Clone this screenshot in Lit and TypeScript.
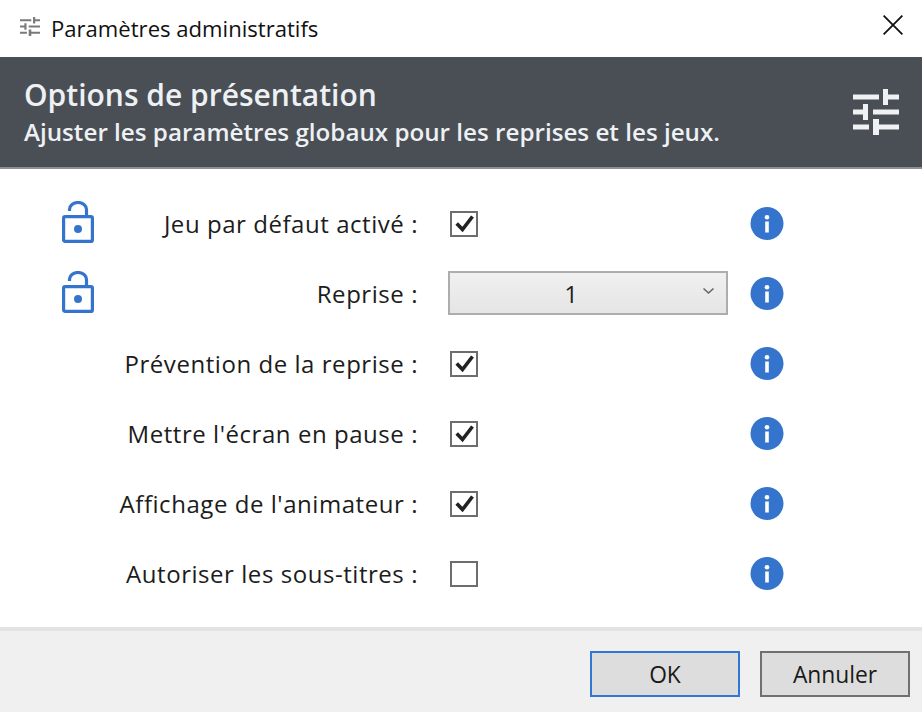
import { LitElement, html, css, svg } from "lit";
import { customElement } from "lit/decorators.js";

const sliders = svg`<path d="M0 5.5h26v5H0zM30 0h5v16h-5zM35 5.5h11v5H35zM0 20.5h10v5H0zM10 15h5v16h-5zM20 20.5h26v5H20zM0 35.5h16v5H0zM20 30h6v16h-6zM26 35.5h20v5H26z"/>`;

interface Row {
  label: string;
  kind: "check" | "empty" | "select";
  lock?: boolean;
}

const ROWS: Row[] = [
  { label: "Jeu par défaut activé :", kind: "check", lock: true },
  { label: "Reprise :", kind: "select", lock: true },
  { label: "Prévention de la reprise :", kind: "check" },
  { label: "Mettre l'écran en pause :", kind: "check" },
  { label: "Affichage de l'animateur :", kind: "check" },
  { label: "Autoriser les sous-titres :", kind: "empty" },
];

@customElement("app-root")
export class AppRoot extends LitElement {
  static styles = css`
    :host {
      display: flex;
      flex-direction: column;
      width: 922px;
      height: 712px;
      background: #fff;
      font-family: "Open Sans", "Noto Sans", sans-serif;
      color: #1a1a1a;
      overflow: hidden;
    }
    .titlebar {
      height: 57px;
      flex: none;
      display: flex;
      align-items: center;
      box-sizing: border-box;
      padding: 0 19px 0 20px;
    }
    .title-icon {
      width: 20px;
      height: 19px;
      fill: #7a7a7a;
      margin: 0 11px 4px 0;
    }
    .title {
      flex: 1;
      font-size: 22.1px;
      color: #111;
      white-space: nowrap;
      margin-bottom: 2px;
    }
    .close {
      width: 20px;
      height: 20px;
      stroke: #111;
      stroke-width: 1.8;
      fill: none;
      margin-bottom: 7px;
    }
    .header {
      height: 112px;
      flex: none;
      box-sizing: border-box;
      background: #4a4e55;
      border-bottom: 2px solid #8e9193;
      display: flex;
      align-items: center;
      justify-content: space-between;
      padding: 0 23px 0 24px;
      color: #eef1f4;
    }
    .h1 {
      font-size: 30px;
      font-weight: 600;
      line-height: 38px;
      white-space: nowrap;
      margin-bottom: 2px;
    }
    .h2 {
      font-size: 24.2px;
      font-weight: 600;
      line-height: 32px;
      white-space: nowrap;
    }
    .header-icon {
      width: 46px;
      height: 46px;
      fill: #f0f1f2;
    }
    .body {
      flex: 1;
      box-sizing: border-box;
      padding: 20px 0 0 62px;
      display: grid;
      grid-template-columns: 32px 323px 280px 34px;
      grid-auto-rows: 70px;
      align-items: center;
    }
    .lock {
      width: 32px;
      height: 42px;
      margin-bottom: 4px;
      fill: none;
      stroke: #3574cc;
      stroke-width: 3.2;
    }
    .label {
      text-align: right;
      font-size: 24px;
      font-weight: 500;
      letter-spacing: 0.55px;
      color: #1c1c1c;
      white-space: nowrap;
      margin: 0 -1px 2px 0;
    }
    .control {
      margin-left: 31px;
      width: 280px;
      grid-column: 3;
      display: flex;
      align-items: center;
    }
    .checkbox {
      margin-left: 2px;
      width: 28px;
      height: 26px;
      box-sizing: border-box;
      border: 2px solid #6d6d6d;
      background: #fff;
      display: flex;
      align-items: center;
      justify-content: center;
    }
    .checkbox svg {
      width: 20px;
      height: 18px;
      fill: none;
      stroke: #222;
      stroke-width: 3.6;
    }
    .select {
      width: 280px;
      height: 44px;
      margin-bottom: 2px;
      box-sizing: border-box;
      border: 2px solid #adadad;
      background: linear-gradient(#f0f0f0, #e5e5e5);
      display: flex;
      align-items: center;
      justify-content: center;
      position: relative;
      font-size: 24px;
      color: #222;
      padding-right: 34px;
    }
    .chevron {
      position: absolute;
      right: 11px;
      top: 14px;
      width: 13px;
      height: 8px;
      fill: none;
      stroke: #666;
      stroke-width: 1.6;
    }
    .info {
      margin-left: 53px;
      width: 34px;
      height: 34px;
      display: block;
    }
    .footer {
      height: 85px;
      flex: none;
      box-sizing: border-box;
      border-top: 4px solid #e3e3e3;
      background: #f0f0f0;
      display: flex;
      justify-content: flex-end;
      gap: 20px;
      padding: 20px 12px 0 0;
    }
    .btn {
      width: 150px;
      height: 46px;
      box-sizing: border-box;
      background: #dddddd;
      border: 2px solid #707070;
      font: inherit;
      font-size: 22.8px;
      color: #1a1a1a;
      padding: 0;
    }
    .btn.primary {
      border-color: #3277d2;
    }
  `;

  private renderControl(r: Row) {
    if (r.kind === "select") {
      return html`<div class="select">
        1
        <svg class="chevron" viewBox="0 0 13 8"><path d="M1.5 1.5 6.5 6l5-4.5" /></svg>
      </div>`;
    }
    return html`<div class="checkbox">
      ${r.kind === "check"
        ? html`<svg viewBox="0 0 20 18"><path d="M2.7 8.5 8.5 14.6 18.5 1.5" /></svg>`
        : ""}
    </div>`;
  }

  render() {
    return html`
      <div class="titlebar">
        <svg class="title-icon" viewBox="0 0 46 46" preserveAspectRatio="none">${sliders}</svg>
        <div class="title">Paramètres administratifs</div>
        <svg class="close" viewBox="0 0 20 20"><path d="M.6.6l18.8 18.8M19.4.6.6 19.4" /></svg>
      </div>
      <div class="header">
        <div>
          <div class="h1">Options de présentation</div>
          <div class="h2">Ajuster les paramètres globaux pour les reprises et les jeux.</div>
        </div>
        <svg class="header-icon" viewBox="0 0 46 46">${sliders}</svg>
      </div>
      <div class="body">
        ${ROWS.map(
          (r) => html`
            ${r.lock
              ? html`<svg class="lock" viewBox="0 0 32 42">
                  <path d="M7.5 10V8.5a8.5 7 0 0 1 17 0V15" />
                  <rect x="1.6" y="15.6" width="28.8" height="24.8" rx="1.5" />
                  <circle cx="16" cy="28" r="4" fill="#3574cc" stroke="none" />
                </svg>`
              : html`<span></span>`}
            <div class="label">${r.label}</div>
            <div class="control">${this.renderControl(r)}</div>
            <svg class="info" viewBox="0 0 34 34">
              <circle cx="17" cy="16.5" r="16.5" fill="#3574cc" />
              <circle cx="17" cy="10.3" r="2.3" fill="#fff" />
              <rect x="15.2" y="14.5" width="3.6" height="11" fill="#fff" />
            </svg>
          `
        )}
      </div>
      <div class="footer">
        <button class="btn primary">OK</button>
        <button class="btn">Annuler</button>
      </div>
    `;
  }
}
